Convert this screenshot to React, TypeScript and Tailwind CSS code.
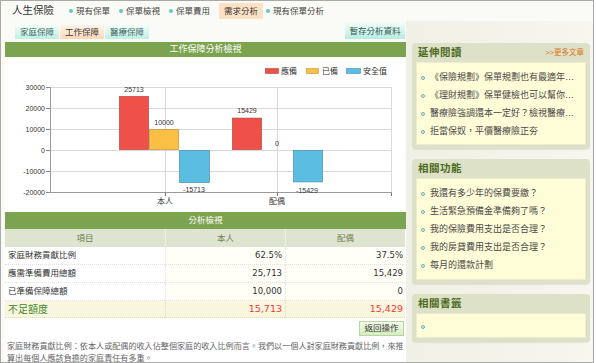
import React from 'react';

const CJK = "font-['Liberation_Sans','Noto_Sans_CJK_TC',sans-serif]";

const NAV = ['現有保單', '保單檢視', '保單費用', '需求分析', '現有保單分析'];

const READING = [
  '《保險規劃》保單規劃也有最適年…',
  '《理財規劃》保單健檢也可以幫你…',
  '醫療險強調還本一定好？檢視醫療…',
  '拒當保奴，平價醫療險正夯',
];

const FEATURES = [
  '我還有多少年的保費要繳？',
  '生活緊急預備金準備夠了嗎？',
  '我的保險費用支出是否合理？',
  '我的房貸費用支出是否合理？',
  '每月的還款計劃',
];

const ROWS = [
  { label: '家庭財務貢獻比例', self: '62.5%', spouse: '37.5%' },
  { label: '應需準備費用總額', self: '25,713', spouse: '15,429' },
  { label: '已準備保障總額', self: '10,000', spouse: '0' },
];

// chart helpers: svg sits at page (5, 57)
const zeroY = 93;
const yOf = (v: number) => zeroY - v * 0.0021;

const Chart = () => {
  const ticks = [30000, 20000, 10000, 0, -10000, -20000];
  const bars = [
    { x: 114, w: 30, v: 25713, fill: '#f0504a', stroke: '#b9403a' },
    { x: 144, w: 30, v: 10000, fill: '#fcbf45', stroke: '#c7932f' },
    { x: 174, w: 31, v: -15713, fill: '#5bbde1', stroke: '#4290ad' },
    { x: 227, w: 30, v: 15429, fill: '#f0504a', stroke: '#b9403a' },
    { x: 288, w: 30, v: -15429, fill: '#5bbde1', stroke: '#4290ad' },
  ];
  const labels = [
    { x: 129, y: 34.5, t: '25713' },
    { x: 159, y: 67.5, t: '10000' },
    { x: 189, y: 134.5, t: '-15713' },
    { x: 242, y: 55.5, t: '15429' },
    { x: 272, y: 88.5, t: '0' },
    { x: 302, y: 135.5, t: '-15429' },
  ];
  return (
    <svg width="400" height="155" className="block bg-white">
      {/* legend */}
      <rect x="260.5" y="11.5" width="13" height="5" fill="#f0504a" stroke="#b9403a" strokeWidth="0.6" />
      <text x="276" y="17" fontSize="8" fill="#333" fontFamily="Noto Sans CJK TC">應備</text>
      <rect x="301.5" y="11.5" width="12" height="5" fill="#fcbf45" stroke="#c7932f" strokeWidth="0.6" />
      <text x="317" y="17" fontSize="8" fill="#333" fontFamily="Noto Sans CJK TC">已備</text>
      <rect x="341.5" y="11.5" width="14" height="5" fill="#5bbde1" stroke="#4290ad" strokeWidth="0.6" />
      <text x="358" y="17" fontSize="8" fill="#333" fontFamily="Noto Sans CJK TC">安全值</text>

      {/* grid */}
      {ticks.map((t) => (
        <g key={t}>
          <line x1="45.5" x2="386" y1={Math.round(yOf(t)) + 0.5} y2={Math.round(yOf(t)) + 0.5} stroke="#d9d9d9" />
          <line x1="41" x2="45.5" y1={Math.round(yOf(t)) + 0.5} y2={Math.round(yOf(t)) + 0.5} stroke="#888" />
          <text x="40" y={Math.round(yOf(t)) + 3} fontSize="7" textAnchor="end" fill="#333" fontFamily="Liberation Sans">
            {t}
          </text>
        </g>
      ))}
      <line x1="160.5" x2="160.5" y1="30" y2="138" stroke="#d9d9d9" />
      <line x1="272.5" x2="272.5" y1="30" y2="138" stroke="#d9d9d9" />
      <line x1="386.5" x2="386.5" y1="30" y2="138" stroke="#d9d9d9" />
      <line x1="45.5" x2="45.5" y1="30" y2="135.5" stroke="#999" />
      <line x1="45.5" x2="386.5" y1="135.5" y2="135.5" stroke="#999" />
      <line x1="160.5" x2="160.5" y1="135.5" y2="139" stroke="#777" />
      <line x1="272.5" x2="272.5" y1="135.5" y2="139" stroke="#777" />
      <line x1="386.5" x2="386.5" y1="135.5" y2="139" stroke="#777" />

      {/* bars */}
      {bars.map((b, i) => {
        const top = b.v >= 0 ? yOf(b.v) : zeroY;
        const h = Math.abs(b.v) * 0.0021;
        return <rect key={i} x={b.x + 0.5} y={top + 0.5} width={b.w - 1} height={h - 1} fill={b.fill} stroke={b.stroke} strokeWidth="0.7" />;
      })}
      {labels.map((l, i) => (
        <text key={i} x={l.x} y={l.y} fontSize="7" textAnchor="middle" fill="#333" fontFamily="Liberation Sans">
          {l.t}
        </text>
      ))}
      <text x="160" y="146.5" fontSize="8" textAnchor="middle" fill="#333" fontFamily="Noto Sans CJK TC">本人</text>
      <text x="272" y="146.5" fontSize="8" textAnchor="middle" fill="#333" fontFamily="Noto Sans CJK TC">配偶</text>
    </svg>
  );
};

const Bullet = () => (
  <span className="w-[4px] h-[4px] rounded-full border border-[#6fb4ae] bg-[#d6f0ec] shrink-0" />
);

const SideBox = ({ title, more, items, innerH, empty }: { title: string; more?: boolean; items: string[]; innerH: string; empty?: boolean }) => (
  <div className="rounded-[4px] bg-[#dce1c8] px-[4px] pb-[4px] shadow-[0_1px_1px_rgba(0,0,0,0.08)]">
    <div className="h-[19px] flex items-center justify-between pl-[2px] pr-[2px]">
      <span className="text-[10.5px] font-bold tracking-[0.5px] text-[#4c6a1d]">{title}</span>
      {more && <span className="text-[7.5px] text-[#e07718]">&gt;&gt;更多文章</span>}
    </div>
    <div className={`bg-[#fffcd8] border border-[#eeead0] ${innerH} pt-[6px] pl-[4px]`}>
      {items.map((t) => (
        <div key={t} className="h-[18px] flex items-center gap-[5px] text-[9px] text-[#4a4a4a] whitespace-nowrap">
          <Bullet />
          <span>{t}</span>
        </div>
      ))}
      {empty && (
        <div className="h-[14px] flex items-center">
          <Bullet />
        </div>
      )}
    </div>
  </div>
);

export default function App() {
  return (
    <div className={`w-[594px] h-[363px] overflow-hidden border border-[#a9a9a9] bg-[#fafaf6] ${CJK}`}>
      {/* top nav */}
      <div className="h-[20px] flex items-center pl-[11px]">
        <span className="text-[10.5px] font-normal text-[#333] w-[57px]">人生保險</span>
        <div className="flex items-center">
          {NAV.map((n) =>
            n === '需求分析' ? (
              <span key={n} className="h-[16px] px-[5px] mr-[3px] flex items-center bg-[#fde1c3] text-[8.5px] text-[#333]">
                {n}
              </span>
            ) : (
              <span key={n} className="flex items-center gap-[3px] mr-[9px] text-[8.5px] text-[#444]">
                <span className="w-[4px] h-[4px] rounded-full bg-[#62c9bd]" />
                {n}
              </span>
            )
          )}
        </div>
      </div>

      <div className="flex">
        {/* main column */}
        <div className="w-[405px] pl-[4px]">
          <div className="h-[21px] flex items-end justify-between pb-[3px] pl-[10px] pr-[1px]">
            <div className="flex gap-[1px]">
              <span className="w-[44px] h-[14px] flex items-center justify-center text-[8.5px] text-[#3d6b5e] bg-gradient-to-b from-[#f3fdf9] to-[#bfeee5]">家庭保障</span>
              <span className="w-[44px] h-[14px] flex items-center justify-center text-[8.5px] text-[#333] bg-gradient-to-b from-[#fff4e8] to-[#fbd8b6]">工作保障</span>
              <span className="w-[44px] h-[14px] flex items-center justify-center text-[8.5px] text-[#3d6b5e] bg-gradient-to-b from-[#f3fdf9] to-[#bfeee5]">醫療保障</span>
            </div>
            <span className="w-[60px] h-[16px] flex items-center justify-center text-[8.5px] text-[#2f5a50] bg-gradient-to-b from-[#f0fcf8] to-[#b7ece2]">暫存分析資料</span>
          </div>

          <div className="h-[15px] bg-[#7ca34f] flex items-center justify-center text-[9px] text-white">工作保障分析檢視</div>
          <Chart />

          {/* summary table */}
          <div className="h-[17px] bg-[#7ca34f] flex items-center justify-center text-[8.5px] text-white">分析檢視</div>
          <div className="grid grid-cols-[160px_120px_120px] bg-white">
            {['項目', '本人', '配偶'].map((h, i) => (
              <div key={h} className={`h-[18px] flex items-center justify-center bg-[#dfe4d1] text-[8.5px] text-[#6c8150] ${i > 0 ? 'border-l border-[#eef0e6]' : ''}`}>
                {h}
              </div>
            ))}
            {ROWS.map((r) => (
              <React.Fragment key={r.label}>
                <div className="h-[18px] flex items-center pl-[3px] text-[8.5px] text-[#333] border-b border-dotted border-[#e2e2e2]">{r.label}</div>
                <div className="h-[18px] flex items-center justify-end pr-[3px] bg-[#fffff8] border-l border-b border-dotted border-[#e2e2e2] font-['DejaVu_Sans',sans-serif] text-[8.5px] text-[#333]">{r.self}</div>
                <div className="h-[18px] flex items-center justify-end pr-[2px] bg-[#fffff8] border-l border-b border-dotted border-[#e2e2e2] font-['DejaVu_Sans',sans-serif] text-[8.5px] text-[#333]">{r.spouse}</div>
              </React.Fragment>
            ))}
            <div className="h-[17px] flex items-center pl-[3px] bg-[#f8f6de] text-[10px] text-[#3e8a2c] border-b border-dotted border-[#dedbb8]">不足額度</div>
            <div className="h-[17px] flex items-center justify-end pr-[3px] bg-[#f8f6de] border-l border-b border-dotted border-[#dedbb8] font-['DejaVu_Sans',sans-serif] text-[9.5px] text-[#f03a3a]">15,713</div>
            <div className="h-[17px] flex items-center justify-end pr-[2px] bg-[#f8f6de] border-l border-b border-dotted border-[#dedbb8] font-['DejaVu_Sans',sans-serif] text-[9.5px] text-[#f03a3a]">15,429</div>
          </div>

          <div className="bg-white pt-[3px] pb-[5px] flex justify-end pr-[2px]">
            <span className="w-[45px] h-[15px] flex items-center justify-center border border-[#b9d4a0] bg-gradient-to-b from-[#f4fbe9] to-[#d6ecc0] text-[8.5px] text-[#333]">返回操作</span>
          </div>
          <p className="bg-white px-[2px] text-[8.1px] leading-[12px] text-[#666]">
            家庭財務貢獻比例：依本人或配偶的收入佔整個家庭的收入比例而言。我們以一個人對家庭財務貢獻比例，來推算出每個人應該負擔的家庭責任有多重。
          </p>
        </div>

        {/* sidebar */}
        <div className="flex-1 pl-[6px] pr-[3px] pt-[22px] flex flex-col gap-[10px] bg-gradient-to-r from-[#f1f0e6] to-[#f7f6ef]">
          <SideBox title="延伸閱讀" more items={READING} innerH="h-[83px]" />
          <SideBox title="相關功能" items={FEATURES} innerH="h-[102px]" />
          <SideBox title="相關書籤" items={[]} innerH="h-[25px]" empty />
        </div>
      </div>
    </div>
  );
}
